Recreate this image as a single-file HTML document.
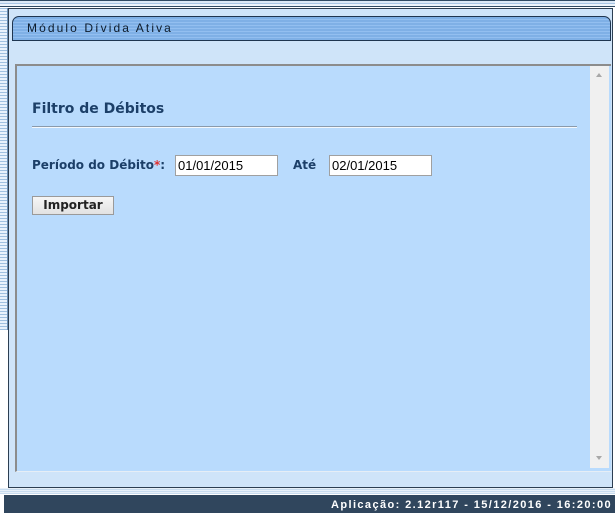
<!DOCTYPE html>
<html><head><style>
body{margin:0;width:615px;height:513px;overflow:hidden;background:#fff;font-family:"DejaVu Sans",Verdana,sans-serif;position:relative}
.left{position:absolute;left:0;top:8px;width:7px;height:322px;background:repeating-linear-gradient(#9fc0e0 0 1px,#e8f2fc 1px 3px);border-right:1px solid #6a8fb5}
.top{position:absolute;left:0;top:0;width:615px;height:7px;background:linear-gradient(#2f4a63 0 1px,#dce9f6 1px 3px,#a9c6e4 3px 4px,#eef5fc 4px 6px,#2f4a63 6px 7px)}
.panel{position:absolute;left:8px;top:8px;width:603px;height:478px;background:#cfe4f9;border:1px solid #2c3e52}
.tab{position:absolute;left:12px;top:16px;width:597px;height:23px;border:1px solid #1f3550;border-radius:7px 7px 0 0;background:repeating-linear-gradient(#7fb0e6 0 2px,#93bff0 2px 3px)}
.tab span{position:absolute;left:14px;top:4px;font-family:"Liberation Sans",Arial,sans-serif;font-size:12px;letter-spacing:2.1px;color:#0d1b2a}
.frame{position:absolute;left:15px;top:64px;width:594px;height:405px;background:#b9dbfd;border-top:2px solid #8c8c8c;border-left:2px solid #8c8c8c;border-bottom:1px solid #e6eef6}
.sb{position:absolute;left:590px;top:66px;width:19px;height:402px;background:#f0f0f0}
.title{position:absolute;left:32px;top:101px;font-size:14px;font-weight:bold;color:#1c3f68}
.hr{position:absolute;left:32px;top:126px;width:545px;height:1px;background:#8a9aab;border-bottom:1px solid #f4f8fc}
.lbl{position:absolute;top:158px;font-size:12px;font-weight:bold;color:#1c3f68}
.in{position:absolute;top:155px;background:#fff;border:1px solid #a0a0a0;font-family:"Liberation Sans",Arial,sans-serif;font-size:13px;line-height:19px;padding-left:2px;box-sizing:border-box;width:103px;height:21px}
.btn{position:absolute;left:32px;top:196px;width:82px;height:19px;box-sizing:border-box;border:1px solid #9a9a9a;background:linear-gradient(#f6f6f6,#e2e2e2);font-size:12px;font-weight:bold;color:#222;text-align:center;line-height:17px}
.foot{position:absolute;left:4px;top:495px;width:611px;height:18px;background:#30465d;color:#fff;font-family:"Liberation Sans",Arial,sans-serif;font-weight:bold;font-size:11px;letter-spacing:1.4px;text-align:right;line-height:20px;box-sizing:border-box;padding-right:3px}
</style></head><body>
<div class="top"></div>
<div class="left"></div>
<div class="panel"></div>
<div class="tab"><span>Módulo Dívida Ativa</span></div>
<div class="frame"></div>
<div class="sb"><div style="position:absolute;left:6px;top:7px;border:3px solid transparent;border-bottom:4px solid #a8a8a8;border-top:0"></div><div style="position:absolute;left:6px;top:390px;border:3px solid transparent;border-top:4px solid #a8a8a8;border-bottom:0"></div></div>
<div class="title">Filtro de Débitos</div>
<div class="hr"></div>
<div class="lbl" style="left:32px">Período do Débito<span style="color:#e03030">*</span>:</div>
<div class="in" style="left:175px">01/01/2015</div>
<div class="lbl" style="left:293px">Até</div>
<div class="in" style="left:329px">02/01/2015</div>
<div class="btn">Importar</div>
<div style="position:absolute;left:0;top:488px;width:615px;height:6px;background:repeating-linear-gradient(#e8f0f8 0 1px,#c8dcef 1px 2px)"></div>
<div class="foot">Aplicação: 2.12r117 - 15/12/2016 - 16:20:00</div>
</body></html>
